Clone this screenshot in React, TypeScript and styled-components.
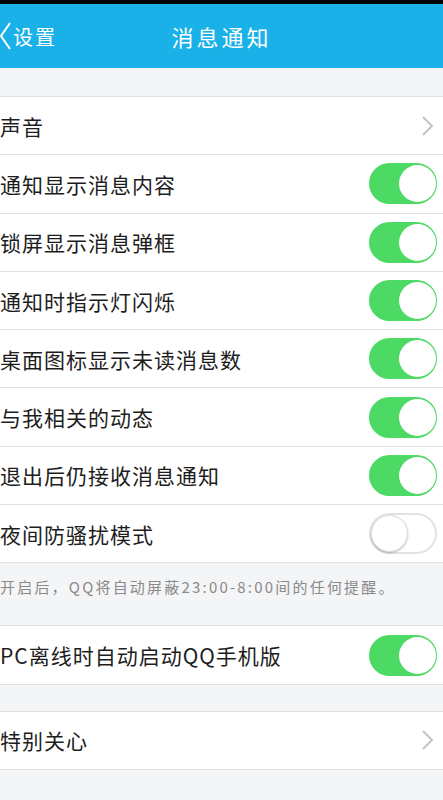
import React, { useState } from 'react';
import styled, { createGlobalStyle } from 'styled-components';

const GlobalStyle = createGlobalStyle`
    html, body {
        margin: 0;
        padding: 0;
        background: #f4f5f7;
    }
    body {
        font-family: "Noto Sans CJK SC", "Liberation Sans", sans-serif;
    }
`;

const Screen = styled.div`
    width: 443px;
    min-height: 800px;
    background: #f4f5f7;
    border-top: 4px solid #000;
    overflow: hidden;
`;

const NavBar = styled.div`
    height: 64px;
    background: #1ab1e8;
    display: grid;
    grid-template-columns: 1fr auto 1fr;
    align-items: center;
    color: #fff;
`;

const BackLink = styled.div`
    display: flex;
    align-items: center;
    gap: 2px;
    font-size: 20px;
    letter-spacing: 2px;
`;

const Title = styled.div`
    font-size: 22px;
    letter-spacing: 3px;
`;

const Spacer = styled.div<{ h: number }>`
    height: ${p => p.h}px;
`;

const Group = styled.div`
    background: #fff;
    border-top: 1px solid #dedede;
    border-bottom: 1px solid #dedede;
`;

const Row = styled.div`
    height: 57.3px;
    display: flex;
    align-items: center;
    justify-content: space-between;
    padding: 0 6px 0 0;
    & + & {
        border-top: 1px solid #e2e2e2;
    }
`;

const Label = styled.span`
    font-size: 21px;
    letter-spacing: 1px;
    color: #1d1d1d;
`;

const Note = styled.div`
    height: 62px;
    padding-top: 13px;
    box-sizing: border-box;
    font-size: 15px;
    letter-spacing: 2.2px;
    color: #8a8a8a;
`;

const Track = styled.button<{ on: boolean }>`
    position: relative;
    width: 68px;
    height: 41px;
    border-radius: 21px;
    border: 2px solid ${p => (p.on ? '#4cd964' : '#e3e3e3')};
    background: ${p => (p.on ? '#4cd964' : '#fff')};
    padding: 0;
    cursor: pointer;
    box-sizing: border-box;
`;

const Knob = styled.span<{ on: boolean }>`
    position: absolute;
    top: 0;
    left: ${p => (p.on ? '28px' : '0')};
    width: 37px;
    height: 37px;
    border-radius: 50%;
    background: #fff;
    box-shadow: ${p => (p.on ? 'none' : '0 1px 2px rgba(0,0,0,0.25)')};
    border: ${p => (p.on ? 'none' : '1px solid #dcdcdc')};
    box-sizing: border-box;
`;

const Toggle = ({ initial }: { initial: boolean }) => {
    const [on, setOn] = useState(initial);
    return (
        <Track on={on} onClick={() => setOn(!on)}>
            <Knob on={on} />
        </Track>
    );
};

const Chevron = () => (
    <svg width="14" height="22" viewBox="0 0 14 22" style={{ marginRight: 2 }}>
        <path d="M2 2 L11 11 L2 20" fill="none" stroke="#c4c4c8" strokeWidth="2" />
    </svg>
);

const switches: [string, boolean][] = [
    ['通知显示消息内容', true],
    ['锁屏显示消息弹框', true],
    ['通知时指示灯闪烁', true],
    ['桌面图标显示未读消息数', true],
    ['与我相关的动态', true],
    ['退出后仍接收消息通知', true],
    ['夜间防骚扰模式', false]
];

export default function App() {
    return (
        <>
            <GlobalStyle />
            <Screen>
                <NavBar>
                    <BackLink>
                        <svg width="11" height="28" viewBox="0 0 11 28">
                            <path d="M10 1 L1 14 L10 27" fill="none" stroke="#fff" strokeWidth="2" />
                        </svg>
                        <span>设置</span>
                    </BackLink>
                    <Title>消息通知</Title>
                    <div />
                </NavBar>
                <Spacer h={28} />
                <Group>
                    <Row>
                        <Label>声音</Label>
                        <Chevron />
                    </Row>
                    {switches.map(([name, on]) => (
                        <Row key={name}>
                            <Label>{name}</Label>
                            <Toggle initial={on} />
                        </Row>
                    ))}
                </Group>
                <Note>开启后，QQ将自动屏蔽23:00-8:00间的任何提醒。</Note>
                <Group>
                    <Row>
                        <Label>PC离线时自动启动QQ手机版</Label>
                        <Toggle initial={true} />
                    </Row>
                </Group>
                <Spacer h={26} />
                <Group>
                    <Row>
                        <Label>特别关心</Label>
                        <Chevron />
                    </Row>
                </Group>
            </Screen>
        </>
    );
}
